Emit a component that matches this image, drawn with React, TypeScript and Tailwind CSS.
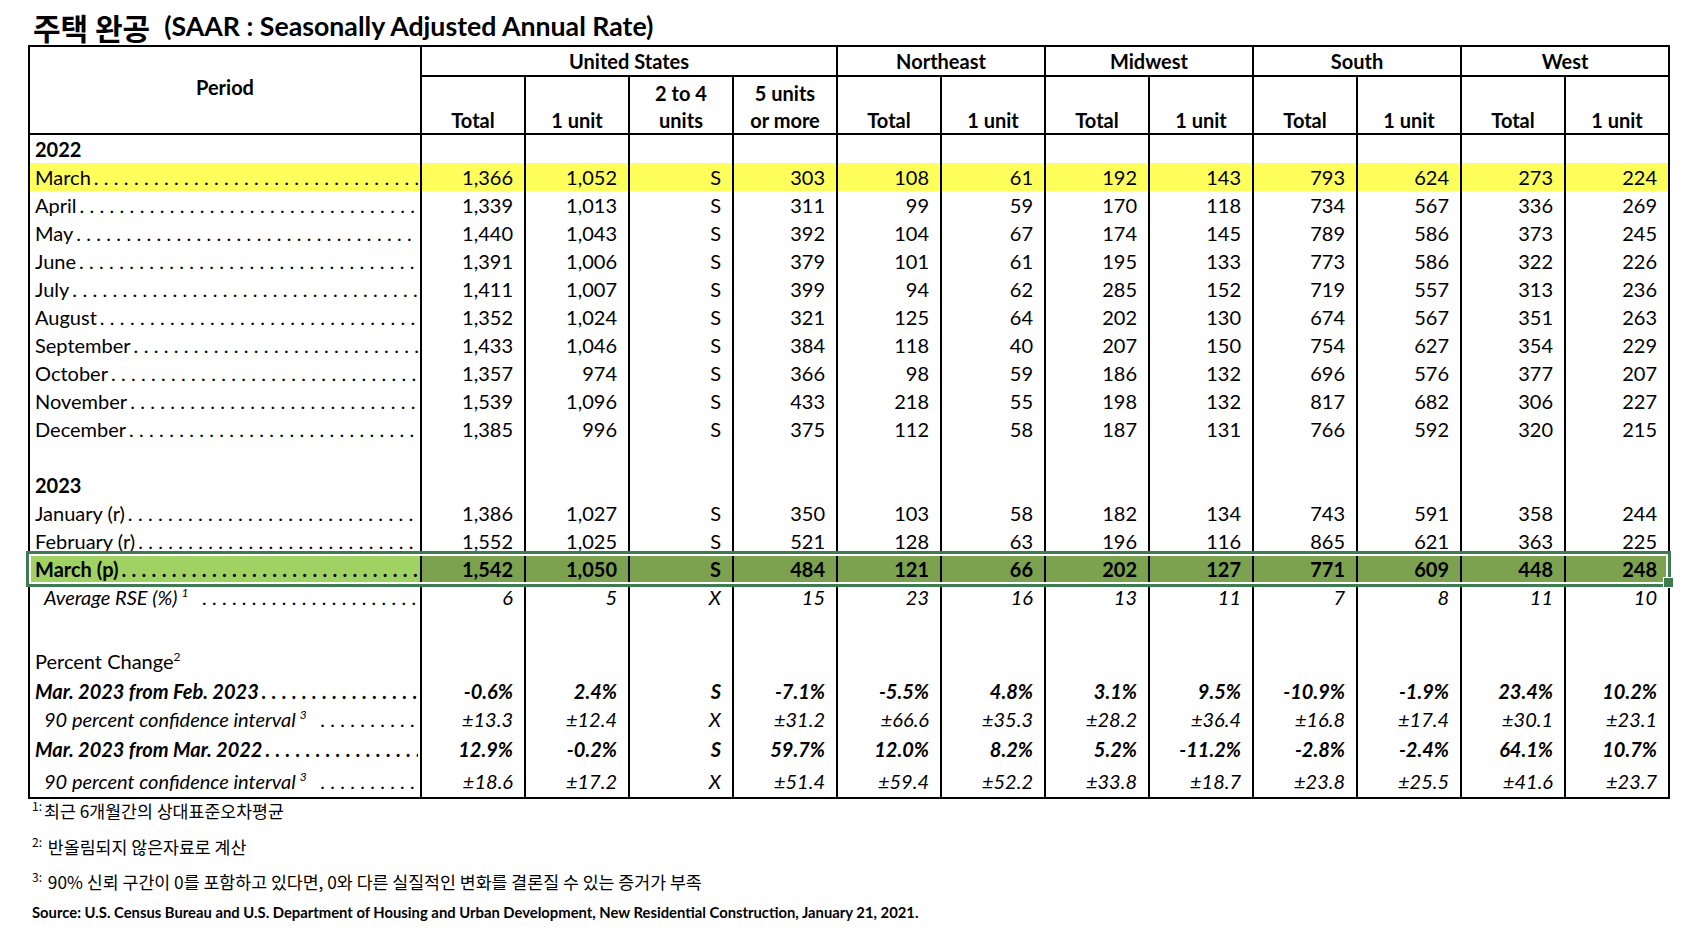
import React from 'react';

type Kind = 'year' | 'row' | 'blank' | 'rse' | 'pc' | 'chg' | 'ci';

interface RowDef {
  kind: Kind;
  label?: string;
  values?: string[];
  hl?: 'yellow' | 'green';
  h?: string;
}

const DOTS = '.'.repeat(60);

const rows: RowDef[] = [
  { kind: 'year', label: '2022' },
  { kind: 'row', label: 'March', hl: 'yellow', values: ['1,366', '1,052', 'S', '303', '108', '61', '192', '143', '793', '624', '273', '224'] },
  { kind: 'row', label: 'April', values: ['1,339', '1,013', 'S', '311', '99', '59', '170', '118', '734', '567', '336', '269'] },
  { kind: 'row', label: 'May', values: ['1,440', '1,043', 'S', '392', '104', '67', '174', '145', '789', '586', '373', '245'] },
  { kind: 'row', label: 'June', values: ['1,391', '1,006', 'S', '379', '101', '61', '195', '133', '773', '586', '322', '226'] },
  { kind: 'row', label: 'July', values: ['1,411', '1,007', 'S', '399', '94', '62', '285', '152', '719', '557', '313', '236'] },
  { kind: 'row', label: 'August', values: ['1,352', '1,024', 'S', '321', '125', '64', '202', '130', '674', '567', '351', '263'] },
  { kind: 'row', label: 'September', values: ['1,433', '1,046', 'S', '384', '118', '40', '207', '150', '754', '627', '354', '229'] },
  { kind: 'row', label: 'October', values: ['1,357', '974', 'S', '366', '98', '59', '186', '132', '696', '576', '377', '207'] },
  { kind: 'row', label: 'November', values: ['1,539', '1,096', 'S', '433', '218', '55', '198', '132', '817', '682', '306', '227'] },
  { kind: 'row', label: 'December', values: ['1,385', '996', 'S', '375', '112', '58', '187', '131', '766', '592', '320', '215'] },
  { kind: 'blank' },
  { kind: 'year', label: '2023' },
  { kind: 'row', label: 'January (r)', values: ['1,386', '1,027', 'S', '350', '103', '58', '182', '134', '743', '591', '358', '244'] },
  { kind: 'row', label: 'February (r)', values: ['1,552', '1,025', 'S', '521', '128', '63', '196', '116', '865', '621', '363', '225'] },
  { kind: 'row', label: 'March (p)', hl: 'green', values: ['1,542', '1,050', 'S', '484', '121', '66', '202', '127', '771', '609', '448', '248'] },
  { kind: 'rse', label: 'Average RSE (%)', values: ['6', '5', 'X', '15', '23', '16', '13', '11', '7', '8', '11', '10'] },
  { kind: 'blank' },
  { kind: 'pc', label: 'Percent Change', h: 'h-[38px] align-bottom pb-[2px]' },
  { kind: 'chg', label: 'Mar. 2023 from Feb. 2023', values: ['-0.6%', '2.4%', 'S', '-7.1%', '-5.5%', '4.8%', '3.1%', '9.5%', '-10.9%', '-1.9%', '23.4%', '10.2%'] },
  { kind: 'ci', label: '90 percent confidence interval', values: ['±13.3', '±12.4', 'X', '±31.2', '±66.6', '±35.3', '±28.2', '±36.4', '±16.8', '±17.4', '±30.1', '±23.1'] },
  { kind: 'chg', label: 'Mar. 2023 from Mar. 2022', h: 'h-[31px]', values: ['12.9%', '-0.2%', 'S', '59.7%', '12.0%', '8.2%', '5.2%', '-11.2%', '-2.8%', '-2.4%', '64.1%', '10.7%'] },
  { kind: 'ci', label: '90 percent confidence interval', h: 'h-[34px] border-b-2', values: ['±18.6', '±17.2', 'X', '±51.4', '±59.4', '±52.2', '±33.8', '±18.7', '±23.8', '±25.5', '±41.6', '±23.7'] },
];

const regions = [
  { name: 'United States', span: 4 },
  { name: 'Northeast', span: 2 },
  { name: 'Midwest', span: 2 },
  { name: 'South', span: 2 },
  { name: 'West', span: 2 },
];

const textStyle = (kind: Kind, green: boolean) => {
  if (kind === 'chg') return 'font-bold italic';
  if (kind === 'rse' || kind === 'ci') return 'italic';
  if (kind === 'year' || green) return 'font-bold';
  return '';
};

const LabelCell: React.FC<{ row: RowDef; bg: string; h: string }> = ({ row, bg, h }) => {
  const green = row.hl === 'green';
  const indent = row.kind === 'rse' || row.kind === 'ci' ? 'pl-[14px]' : 'pl-[5px]';
  const sup = row.kind === 'rse' ? '1' : row.kind === 'pc' ? '2' : row.kind === 'ci' ? '3' : null;
  const dots = row.kind === 'row' || row.kind === 'rse' || row.kind === 'chg' || row.kind === 'ci';
  return (
    <td className={`border-x-2 border-black p-0 pr-[2px] ${h} ${bg} ${green ? 'relative' : ''}`}>
      <div className={`flex overflow-hidden whitespace-nowrap ${indent} ${textStyle(row.kind, green)}`}>
        <span>
          {row.label}
          {sup && <span className={`align-super text-[12px] leading-none ${row.kind === 'pc' ? '' : 'ml-[4px]'}`}>{sup}</span>}
        </span>
        {dots && (
          <span className={`flex-1 overflow-hidden tracking-[5.3px] ${row.kind === 'rse' || row.kind === 'ci' ? 'ml-[14px]' : 'ml-[3px]'}`}>{DOTS}</span>
        )}
      </div>
      {green && (
        <div className="pointer-events-none absolute left-[-4px] top-[-4px] bottom-[-4px] w-[1645px] border-[3px] border-[#3e7b51] shadow-[inset_0_0_0_2px_white]">
          <div className="absolute right-[-6px] bottom-[-4px] h-[11px] w-[11px] border border-white bg-[#3e7b51]" />
        </div>
      )}
    </td>
  );
};

export default function App() {
  return (
    <div className="min-h-screen bg-white pl-[28px] text-black font-[family-name:Lato,'Noto_Sans_CJK_KR',sans-serif]">
      <div className="flex h-[45px] items-center pl-[5px] pt-[8px] font-bold">
        <span className="text-[30px] leading-none font-[family-name:'Noto_Sans_CJK_KR',sans-serif]">주택 완공</span>
        <span className="ml-[14px] text-[26.7px] leading-none">(SAAR : Seasonally Adjusted Annual Rate)</span>
      </div>

      <table className="w-[1641px] table-fixed border-collapse text-[20px] leading-[28px]">
        <colgroup>
          <col className="w-[392px]" />
          {Array.from({ length: 12 }).map((_, i) => (
            <col key={i} className="w-[104px]" />
          ))}
        </colgroup>
        <thead className="font-bold">
          <tr>
            <th rowSpan={2} className="border-2 border-black p-0 text-center align-middle font-bold">
              <div className="pb-[6px]">Period</div>
            </th>
            {regions.map(r => (
              <th key={r.name} colSpan={r.span} className="h-[29px] border-2 border-black p-0 text-center align-middle font-bold">
                {r.name}
              </th>
            ))}
          </tr>
          <tr>
            {['Total', '1 unit', '2 to 4|units', '5 units|or more', 'Total', '1 unit', 'Total', '1 unit', 'Total', '1 unit', 'Total', '1 unit'].map((t, i) => (
              <th key={i} className="h-[58px] border-2 border-black p-0 text-center align-bottom font-bold">
                {t.split('|').map((line, j, all) => (
                  <div key={j} className={j === all.length - 1 ? 'leading-[25px]' : 'leading-[30px]'}>
                    {line}
                  </div>
                ))}
              </th>
            ))}
          </tr>
        </thead>
        <tbody>
          {rows.map((row, ri) => {
            const h = row.h ?? 'h-[28px]';
            const green = row.hl === 'green';
            const labelBg = row.hl === 'yellow' ? 'bg-[#ffff5c]' : green ? 'bg-[#9fd262]' : '';
            const valBg = row.hl === 'yellow' ? 'bg-[#ffff5c]' : green ? 'bg-[#7ca24f]' : '';
            return (
              <tr key={ri}>
                <LabelCell row={row} bg={labelBg} h={h} />
                {Array.from({ length: 12 }).map((_, ci) => (
                  <td
                    key={ci}
                    className={`border-x-2 border-black p-0 pr-[11px] text-right whitespace-nowrap ${h} ${valBg} ${textStyle(row.kind, green)}`}
                  >
                    {row.values ? row.values[ci] : ''}
                  </td>
                ))}
              </tr>
            );
          })}
        </tbody>
      </table>

      <div className="pl-[4px] font-[family-name:'Noto_Sans_CJK_KR',Lato,sans-serif] text-[17.3px]">
        <div className="mt-[1px] leading-[22px]">
          <span className="mr-[2px] align-super text-[12px] leading-none">1:</span>최근 6개월간의 상대표준오차평균
        </div>
        <div className="mt-[14px] leading-[22px]">
          <span className="mr-[2px] align-super text-[12px] leading-none">2:</span> 반올림되지 않은자료로 계산
        </div>
        <div className="mt-[13px] leading-[22px]">
          <span className="mr-[2px] align-super text-[12px] leading-none">3:</span> 90% 신뢰 구간이 0를 포함하고 있다면, 0와 다른 실질적인 변화를 결론질 수 있는 증거가 부족
        </div>
        <div className="mt-[10px] text-[14.8px] leading-[18px] font-bold font-[family-name:Lato,sans-serif]">
          Source: U.S. Census Bureau and U.S. Department of Housing and Urban Development, New Residential Construction, January 21, 2021.
        </div>
      </div>
    </div>
  );
}
